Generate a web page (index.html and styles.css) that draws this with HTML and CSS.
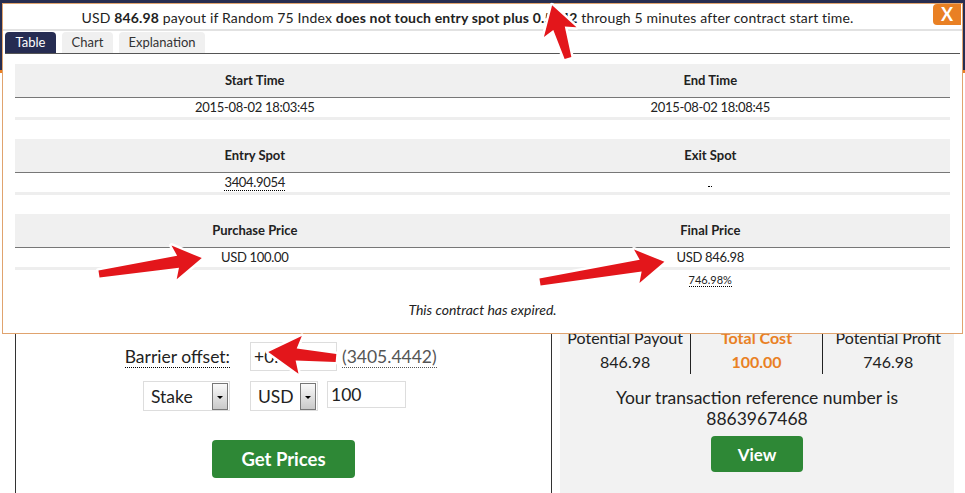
FILE: index.html
```html
<!DOCTYPE html>
<html lang="en">
<head>
    <meta charset="UTF-8">
    <meta name="viewport" content="width=device-width, initial-scale=1.0">
    <title>Contract Details</title>
    <link rel="stylesheet" href="styles.css">
</head>
<body>
    <div class="page">
        <header class="topbar"></header>
        <main class="trade">
            <section class="trade-form">
                <div class="form-grid">
                    <label class="form-label dotted" for="barrier">Barrier offset:</label>
                    <div class="form-field">
                        <input type="text" id="barrier" class="barrier-input" value="+0.5442">
                        <span class="spot dotted">(3405.4442)</span>
                    </div>

                    <div class="select stake-select">Stake <span class="drop"></span></div>
                    <div class="form-field">
                        <div class="select currency-select">USD <span class="drop"></span></div>
                        <input type="text" class="amount-input" value="100">
                    </div>
                </div>
                <button class="btn get-prices">Get Prices</button>
            </section>

            <section class="confirm">
                <div class="price-grid">
                    <div class="price-cell">Potential Payout</div>
                    <div class="price-cell cost">Total Cost</div>
                    <div class="price-cell">Potential Profit</div>
                    <div class="price-cell">846.98</div>
                    <div class="price-cell cost">100.00</div>
                    <div class="price-cell">746.98</div>
                </div>
                <p class="ref">Your transaction reference number is<br>8863967468</p>
                <button class="btn view">View</button>
            </section>
        </main>
    </div>

    <div class="dialog">
        <div class="dlg-title">
            USD <b>846.98</b> payout if Random 75 Index <b>does not touch entry spot plus 0.5442</b> through 5 minutes after contract start time.
        </div>
        <a class="dlg-close">X</a>
        <div class="tabs">
            <span class="tab active">Table</span>
            <span class="tab">Chart</span>
            <span class="tab tab-wide">Explanation</span>
        </div>
        <div class="dlg-body">
            <table class="spot-table">
                <tr><th>Start Time</th><th>End Time</th></tr>
                <tr class="first"><td>2015-08-02 18:03:45</td><td>2015-08-02 18:08:45</td></tr>
            </table>
            <table class="spot-table">
                <tr><th>Entry Spot</th><th>Exit Spot</th></tr>
                <tr class="first"><td><span class="dotted">3404.9054</span></td><td><span class="dotted empty"></span></td></tr>
            </table>
            <table class="spot-table">
                <tr><th>Purchase Price</th><th>Final Price</th></tr>
                <tr class="first"><td>USD 100.00</td><td>USD 846.98</td></tr>
                <tr class="second"><td></td><td><span class="dotted">746.98%</span></td></tr>
            </table>
            <p class="expired">This contract has expired.</p>
        </div>
    </div>

    <svg class="marks" width="965" height="493" viewBox="0 0 965 493">
        <g fill="#e3161b" stroke="#fff" stroke-width="5" stroke-linejoin="round" paint-order="stroke">
            <polygon transform="translate(568 58) rotate(-106.8)" points="0,-3.5 31,-6 27,-17 55,0 27,17 31,6 0,3.5"/>
            <polygon transform="translate(99 274) rotate(-8.8)" points="0,-3.5 80,-6 76,-17 104,0 76,17 80,6 0,3.5"/>
            <polygon transform="translate(540 282) rotate(-9.2)" points="0,-3.5 102,-6 98,-17 126,0 98,17 102,6 0,3.5"/>
            <polygon transform="translate(336 358) rotate(185)" points="0,-4 40,-6 36,-19 68,0 36,19 40,6 0,4"/>
        </g>
    </svg>
</body>
</html>
```

FILE: styles.css
```css
body {
    margin: 0;
    width: 965px;
    height: 493px;
    overflow: hidden;
    position: relative;
    font-family: Lato, "Open Sans", Arial, sans-serif;
    color: #222;
    background-color: #fff;
}
.topbar {
    height: 70px;
    background-color: #272d50;
    border-bottom: 3px solid #e98024;
}
.trade {
    display: flex;
    padding-left: 15px;
    height: 420px;
}
.trade-form {
    width: 535px;
    border-left: 1px solid #333;
    border-right: 1px solid #333;
    padding-top: 269px;
    text-align: center;
}
.form-grid {
    display: grid;
    grid-template-columns: 214px auto;
    column-gap: 20px;
    row-gap: 10px;
    text-align: left;
    font-size: 17.5px;
}
.form-label {
    justify-self: end;
    align-self: center;
}
.form-field {
    display: flex;
    align-items: center;
}
.dotted {
    border-bottom: 1px dotted #000;
}
.barrier-input,
.amount-input {
    font-family: inherit;
    font-size: 17.5px;
    color: #222;
    border: 1px solid #ddd;
    padding: 0 3px;
    box-sizing: border-box;
    outline: none;
}
.barrier-input {
    width: 87px;
    height: 29px;
}
.spot {
    margin-left: 5px;
    color: #555;
    border-bottom-color: #555;
}
.select {
    position: relative;
    height: 30px;
    line-height: 30px;
    box-sizing: border-box;
    border: 1px solid #ddd;
    padding-left: 7px;
}
.stake-select {
    width: 87px;
    justify-self: end;
}
.currency-select {
    width: 68px;
}
.drop {
    position: absolute;
    right: 1px;
    top: 1px;
    width: 16px;
    height: 27px;
    box-sizing: border-box;
    border: 1px solid #777;
    background: linear-gradient(#fafafa, #c9c9c9);
}
.drop::after {
    content: "";
    position: absolute;
    left: 4px;
    top: 12px;
    border-left: 3px solid transparent;
    border-right: 3px solid transparent;
    border-top: 3px solid #000;
}
.amount-input {
    width: 79px;
    height: 27px;
    margin-left: 9px;
    align-self: flex-start;
}
.btn {
    font-family: inherit;
    font-weight: bold;
    font-size: 17px;
    color: #fff;
    background-color: #2e8836;
    border: none;
    border-radius: 4px;
}
.get-prices {
    margin-top: 29px;
    width: 143px;
    height: 38px;
    font-size: 18.5px;
}
.confirm {
    margin-left: 8px;
    width: 394px;
    background-color: #f2f2f2;
    padding-top: 253px;
    text-align: center;
}
.price-grid {
    display: grid;
    grid-template-columns: 1fr 1fr 1fr;
    font-size: 16px;
    line-height: 24px;
}
.price-cell:nth-child(3n+1),
.price-cell:nth-child(3n+2) {
    border-right: 1px solid #222;
}
.cost {
    color: #e98024;
    font-weight: bold;
}
.ref {
    margin: 13px 0 0;
    font-size: 17.5px;
    line-height: 21px;
}
.view {
    margin-top: 7px;
    width: 92px;
    height: 36px;
}
.dialog {
    position: absolute;
    left: 2px;
    top: 3px;
    width: 961px;
    height: 331px;
    box-sizing: border-box;
    border: 1px solid #e0a36e;
    background-color: #fff;
}
.dlg-title {
    height: 25px;
    line-height: 28px;
    padding-right: 30px;
    text-align: center;
    font-size: 14px;
    letter-spacing: 0.15px;
    border-bottom: 2px solid #e2e2e2;
}
.dlg-close {
    position: absolute;
    top: 0;
    right: 1px;
    width: 28px;
    height: 21px;
    line-height: 21px;
    text-align: center;
    color: #fff;
    font-weight: bold;
    font-size: 18px;
    background-color: #e98024;
    border-radius: 4px 0 0 4px;
}
.tabs {
    display: flex;
    gap: 6px;
    margin: 1px 2px 0;
    border-bottom: 1px solid #555;
}
.tab {
    width: 51px;
    height: 21px;
    line-height: 21px;
    text-align: center;
    font-size: 13px;
    color: #333;
    background-color: #f0f0f0;
    border-radius: 4px 4px 0 0;
}
.tab.active {
    background-color: #262c52;
    color: #fff;
}
.tab-wide {
    width: 86px;
}
.dlg-body {
    padding: 10px 12px 0;
}
.spot-table {
    width: 100%;
    border-collapse: separate;
    border-spacing: 0;
    margin-bottom: 19px;
    text-align: center;
}
.spot-table th,
.spot-table td {
    padding: 0;
    width: 50%;
}
.spot-table th:first-child,
.spot-table td:first-child {
    padding-left: 12px;
}
.spot-table th:last-child,
.spot-table td:last-child {
    padding-right: 12px;
}
.spot-table th {
    line-height: 33px;
    font-size: 13px;
    background-color: #f0f0f0;
    border-bottom: 1px solid #777;
}
.spot-table td {
    line-height: 19px;
    font-size: 13px;
    letter-spacing: -0.3px;
}
.spot-table .first td {
    border-bottom: 3px solid #eee;
}
.spot-table .second td {
    line-height: 20px;
    font-size: 11px;
    letter-spacing: 0;
}
.spot-table:last-of-type {
    margin-bottom: 0;
}
.empty {
    display: inline-block;
    width: 4px;
    height: 12px;
}
.expired {
    margin: 10px 0 0;
    line-height: 20px;
    font-size: 14px;
    font-style: italic;
    text-align: center;
}
.marks {
    position: absolute;
    left: 0;
    top: 0;
    pointer-events: none;
}
```
